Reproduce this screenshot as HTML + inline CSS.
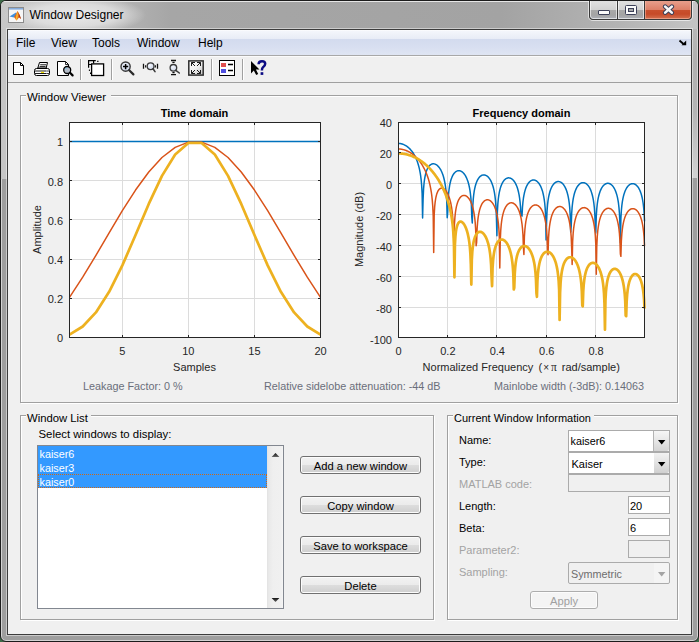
<!DOCTYPE html>
<html><head><meta charset="utf-8"><title>Window Designer</title><style>
*{box-sizing:border-box;margin:0;padding:0}
html,body{width:699px;height:642px;overflow:hidden;background:#3d6a48;font-family:"Liberation Sans",sans-serif}
.abs{position:absolute}
#frame{position:absolute;left:0;top:0;width:699px;height:642px;border-radius:6px 6px 6px 6px;
 background:#9e9e9e;border:1px solid #1c1c1c;overflow:hidden;box-shadow:inset 0 0 0 1px rgba(255,255,255,.55)}
#lstrip{position:absolute;left:0px;top:0px;width:6px;height:178px;background:#c5c5c5}
#rstrip{position:absolute;left:691px;top:0px;width:5px;height:177px;background:linear-gradient(180deg,#bdbdbd 0px,#b0b0b0 60px,#b4b4b4 110px,#d2d2d2 176px)}
#titlebar{position:absolute;left:0px;top:0px;width:697px;height:28px;
 background:linear-gradient(90deg,#c8c8c8 0px,#c2c2c2 40px,#b4b4b4 120px,#a6a6a6 170px,#a3a3a3 500px,#b4b4b4 620px,#c4c4c4 697px);border-top:1px solid #e6e6e6}
#glow{position:absolute;left:3px;top:-5px;width:142px;height:38px;background:radial-gradient(closest-side,rgba(236,236,236,.95) 0%,rgba(230,230,230,.75) 60%,rgba(215,215,215,0) 100%)}
#title{position:absolute;left:28.5px;top:6.5px;font-size:12px;color:#000;white-space:nowrap}
#client{position:absolute;left:7px;top:29px;width:685px;height:606px;border:1px solid #3c3c3c;background:#f0f0f0;box-shadow:0 0 0 1px rgba(255,255,255,.45)}
#menubar{position:absolute;left:8px;top:30px;width:683px;height:26px;
 background:linear-gradient(180deg,#ffffff 0px,#f4f6fb 1px,#e8ecf6 9px,#d3dbee 9px,#d7def0 16px,#dfe5f3 25px);border-bottom:1px solid #a8a8a8}
.menu{position:absolute;top:36px;font-size:12px;color:#000}
#toolbar{position:absolute;left:8px;top:56px;width:683px;height:27px;background:#f0f0f0;border-top:1px solid #fbfbfb;border-bottom:1px solid #a0a0a0}
.sep{position:absolute;top:59px;width:1px;height:21px;background:#a0a0a0;border-right:1px solid #fff;width:2px}
.grp{position:absolute;border:1px solid #a0a0a0;box-shadow:inset 1px 1px 0 #fff,1px 1px 0 #fff}
.glab{position:absolute;font-size:11.5px;color:#000;background:#f0f0f0;padding:0 3px 0 1px;white-space:nowrap}
.lbl{position:absolute;font-size:11px;color:#000;white-space:nowrap}
.dis{color:#a3a3a3}
.btn{position:absolute;height:18px;border:1px solid #707070;border-radius:3px;
 background:linear-gradient(180deg,#f2f2f2 0%,#ebebeb 50%,#dddddd 51%,#cfcfcf 100%);
 font-size:11.2px;text-align:center;line-height:18px;color:#000;box-shadow:inset 0 0 0 1px #fcfcfc}
.fld{position:absolute;border:1px solid #ababab;background:#fff;font-size:11.5px;color:#000;padding-left:2px;line-height:15px}
.stat{position:absolute;font-size:10.8px;color:#6a6e7a;white-space:nowrap}
</style></head>
<body>
<div id="frame"><div id="lstrip"></div><div id="rstrip"></div><div id="titlebar"></div><div id="glow"></div>
<svg class="abs" style="left:7px;top:6px" width="16" height="16" viewBox="0 0 16 16">
<rect x="0.5" y="0.5" width="15" height="15" fill="#f6f6f6" stroke="#8c8c8c"/>
<rect x="1" y="1" width="14" height="1.6" fill="#86acdc"/>
<path d="M1.5,9.5 L5.5,7 L8,5.5 L9,8.5 L6,10.5 Z" fill="#3f8fdc"/>
<path d="M6,10 L8.5,6 L9.3,4 L10.5,5.5 L12,9 L13,12 L11,10.5 L8.5,13.5 Z" fill="#e06818"/>
<path d="M7.5,12 L9.3,4.5 L10,8 L9,13.5 Z" fill="#f5b830"/>
<path d="M10.5,5.5 L12,9 L13,12 L11.2,10 Z" fill="#a83018"/>
</svg>
<div id="title">Window Designer</div>
<div class="abs" style="left:588px;top:-1px;width:103px;height:20px;border:1px solid #3a3a3a;border-top:none;border-radius:0 0 4px 4px;overflow:hidden;background:#3a3a3a;box-shadow:0 1px 0 rgba(255,255,255,.6),-1px 0 0 rgba(255,255,255,.6),1px 0 0 rgba(255,255,255,.6)">
<div class="abs" style="left:0;top:0;width:27px;height:19px;border-radius:0 0 0 3px;box-shadow:inset 0 0 0 1px rgba(255,255,255,.6);background:linear-gradient(180deg,#e2e2e2 0px,#d2d2d2 9.5px,#a9a9a9 10px,#a4a4a4 15px,#aeb2bd 20px)"></div>
<div class="abs" style="left:28px;top:0;width:26px;height:19px;box-shadow:inset 0 0 0 1px rgba(255,255,255,.6);background:linear-gradient(180deg,#e2e2e2 0px,#d2d2d2 9.5px,#a9a9a9 10px,#a4a4a4 15px,#aeb2bd 20px)"></div>
<div class="abs" style="left:55px;top:0;width:46px;height:19px;border-radius:0 0 3px 0;box-shadow:inset 0 0 0 1px rgba(255,200,180,.5);background:linear-gradient(180deg,#e8a290 0px,#dc8068 9.5px,#c9502e 10px,#c64a28 14px,#d67858 20px)"></div>
</div>
<div class="abs" style="left:597px;top:9px;width:12px;height:5px;background:#fafafa;border:1px solid #3c4058;border-radius:1px"></div>
<div class="abs" style="left:624px;top:4px;width:12px;height:10px;border:1px solid #3c4058;border-radius:1.5px;background:#fafafa"></div>
<div class="abs" style="left:627px;top:7px;width:6px;height:4px;border:1px solid #3c4058;background:#a8a8a8"></div>
<svg class="abs" style="left:661px;top:3px" width="13" height="11" viewBox="0 0 13 11"><path d="M3.2,2.6 L9.8,8.6 M9.8,2.6 L3.2,8.6" stroke="#3c4058" stroke-width="4.6" stroke-linecap="round"/><path d="M3.2,2.6 L9.8,8.6 M9.8,2.6 L3.2,8.6" stroke="#f8f8f8" stroke-width="2.6" stroke-linecap="round"/></svg>
</div>
<div id="client"></div>
<div id="menubar"></div>
<div class="menu" style="left:16px">File</div>
<div class="menu" style="left:51px">View</div>
<div class="menu" style="left:92px">Tools</div>
<div class="menu" style="left:137px">Window</div>
<div class="menu" style="left:198px">Help</div>
<svg class="abs" style="left:678px;top:39px" width="10" height="8" viewBox="0 0 10 8"><path d="M1.5,1.5 L5.5,5" stroke="#000" stroke-width="1.8" fill="none"/><path d="M8.2,6.2 L3.5,6.2 L8.2,1.6 Z" fill="#000"/></svg>
<div id="toolbar"></div>
<div class="sep" style="left:80px"></div>
<div class="sep" style="left:111px"></div>
<div class="sep" style="left:211px"></div>
<div class="sep" style="left:242px"></div>
<svg class="abs" style="left:0;top:56px" width="280" height="26" viewBox="0 56 280 26">
<path d="M13.5,62.5 H20.5 L23.5,65.5 V74.5 H13.5 Z" fill="#fff" stroke="#000"/>
<path d="M20.5,62.5 V65.5 H23.5" fill="none" stroke="#000"/>
<path d="M39.5,62.5 H47.5 L46.2,68 H37.8 Z" fill="#fff" stroke="#000"/>
<path d="M40.2,64.8 H46.2 M39.6,66.6 H45.6" stroke="#000" stroke-width="0.9"/>
<rect x="34.5" y="68.5" width="15" height="7" rx="2" fill="#fff" stroke="#000"/>
<path d="M35,71 H49 M35,73.5 H49" stroke="#000" stroke-width="0.9"/>
<rect x="41" y="71.8" width="3" height="1.2" fill="#f2e000"/>
<path d="M46.5,69.5 V75 M48,69.5 V75" stroke="#fff" stroke-width="0.7" stroke-dasharray="1,1"/>
<path d="M57.5,61.5 H65.5 L68.5,64.5 V75.5 H57.5 Z" fill="#fff" stroke="#000"/>
<path d="M65.5,61.5 V64.5 H68.5" fill="none" stroke="#000" stroke-width="0.8"/>
<circle cx="67.2" cy="70" r="3.5" fill="#b4bcc8" stroke="#000" stroke-width="1.3"/>
<path d="M65.5,68.5 L66.5,68" stroke="#5cc8f0" stroke-width="1.2"/>
<path d="M70,72.8 L72.6,75.4" stroke="#000" stroke-width="2.2" stroke-linecap="round"/>
<path d="M88.6,67.8 V60.6 H95.8 M93.6,60.6 V63.5 M88.6,60.6 V64.5 M89,64.5 H91.5" fill="none" stroke="#000" stroke-width="1.2"/>
<path d="M97,61.3 H98.6 M89.4,69.5 V71 M90.5,72.5 V74" stroke="#000" stroke-width="1"/>
<rect x="91.6" y="63.9" width="12" height="11.6" fill="#fff" stroke="#000" stroke-width="1.3"/>
<defs><radialGradient id="lens" cx="0.4" cy="0.35" r="0.7"><stop offset="0" stop-color="#f4f7ff"/><stop offset="1" stop-color="#c8d2e4"/></radialGradient>
<linearGradient id="fv" x1="0" y1="0" x2="1" y2="1"><stop offset="0" stop-color="#ffffff"/><stop offset="0.5" stop-color="#f0f0f0"/><stop offset="1" stop-color="#c4c4c4"/></linearGradient></defs>
<circle cx="125.6" cy="66.6" r="4.6" fill="url(#lens)" stroke="#3a3a3a" stroke-width="1.4"/>
<path d="M123,66.6 H128.2 M125.6,64 V69.2" stroke="#000" stroke-width="1.5"/>
<path d="M129.2,70.2 L133.4,74.4" stroke="#2a2a2a" stroke-width="2.2" stroke-linecap="round"/>
<circle cx="150.6" cy="66.2" r="3.4" fill="url(#lens)" stroke="#3a3a3a" stroke-width="1.3"/>
<path d="M153,68.8 L155,71.6" stroke="#3a3a3a" stroke-width="1.6" stroke-linecap="round"/>
<path d="M143.5,63.8 V68.8 M157.5,63.8 V68.8" stroke="#111" stroke-width="1.3"/>
<path d="M145.6,65.2 V67.4 M155.4,65.2 V67.4" stroke="#111" stroke-width="1.1"/>
<circle cx="173.4" cy="67.8" r="3.3" fill="url(#lens)" stroke="#3a3a3a" stroke-width="1.3"/>
<path d="M175.8,70.3 L179.3,73" stroke="#3a3a3a" stroke-width="1.5" stroke-linecap="round"/>
<path d="M171,60.5 H176 M171,74.6 H176" stroke="#111" stroke-width="1.3"/>
<path d="M172.4,62.4 H174.6 M172.4,72.6 H174.6" stroke="#111" stroke-width="1.1"/>
<rect x="188.8" y="60.9" width="14.4" height="14.2" fill="url(#fv)" stroke="#2e2e2e" stroke-width="1.5"/>
<path d="M191.5,62.5 L195,66 M191.5,62.5 V66 M191.5,62.5 H195 M200.5,62.5 L197,66 M200.5,62.5 V66 M200.5,62.5 H197 M191.5,73.5 L195,70 M191.5,73.5 V70 M191.5,73.5 H195 M200.5,73.5 L197,70 M200.5,73.5 V70 M200.5,73.5 H197" stroke="#1a1a1a" stroke-width="1" fill="none"/>
<rect x="219.5" y="60.5" width="15" height="15" fill="#fff" stroke="#000"/>
<rect x="221" y="63" width="5" height="4" fill="#e05050"/>
<rect x="221" y="69" width="5" height="4" fill="#5050e0"/>
<path d="M228,64.5 H233 M228,70.5 H233" stroke="#000" stroke-width="1.5"/>
<path d="M251,61 L251,73.5 L253.8,70.6 L256.2,75 L258.2,74 L255.9,69.6 L259.5,69.4 Z" fill="#000"/>
<path d="M258.6,64.2 Q258.6,61.2 262,61.2 Q265.2,61.2 265.2,63.8 Q265.2,65.8 263,67.2 Q261.9,68 261.9,70.4" fill="none" stroke="#0c0c84" stroke-width="2.5"/>
<rect x="260.6" y="72.2" width="2.7" height="2.7" fill="#0c0c84"/>
</svg>
<div class="grp" style="left:20px;top:95px;width:658px;height:308px"></div>
<div class="glab" style="left:26px;top:91px;padding-right:5px">Window Viewer</div>
<div class="grp" style="left:20px;top:415px;width:414px;height:205px"></div>
<div class="glab" style="left:26px;top:411.5px;font-size:11.3px">Window List</div>
<div class="grp" style="left:447px;top:415px;width:231px;height:205px"></div>
<div class="glab" style="left:453px;top:411.5px;font-size:11px">Current Window Information</div>
<svg class="abs" style="left:0;top:0" width="699" height="642" viewBox="0 0 699 642"><rect x="69.5" y="122.5" width="251.0" height="215.0" fill="#fff"/>
<rect x="398.5" y="122.5" width="246.0" height="215.0" fill="#fff"/>
<path d="M122.5,122.5V337.5M188.5,122.5V337.5M254.5,122.5V337.5M69.5,298.5H320.5M69.5,259.5H320.5M69.5,219.5H320.5M69.5,180.5H320.5M69.5,141.5H320.5M447.5,122.5V337.5M496.5,122.5V337.5M546.5,122.5V337.5M595.5,122.5V337.5M398.5,152.5H644.5M398.5,183.5H644.5M398.5,214.5H644.5M398.5,245.5H644.5M398.5,276.5H644.5M398.5,307.5H644.5" stroke="#dcdcdc" stroke-width="1" fill="none"/>
<g fill="none" stroke-linejoin="round">
<path d="M69.50,141.50 L82.71,141.50 L95.92,141.50 L109.13,141.50 L122.34,141.50 L135.55,141.50 L148.76,141.50 L161.97,141.50 L175.18,141.50 L188.39,141.50 L201.61,141.50 L214.82,141.50 L228.03,141.50 L241.24,141.50 L254.45,141.50 L267.66,141.50 L280.87,141.50 L294.08,141.50 L307.29,141.50 L320.50,141.50" stroke="#0072bd" stroke-width="1.5"/>
<path d="M69.50,297.34 L82.71,277.20 L95.92,255.37 L109.13,232.85 L122.34,210.71 L135.55,190.06 L148.76,172.01 L161.97,157.51 L175.18,147.37 L188.39,142.16 L201.61,142.16 L214.82,147.37 L228.03,157.51 L241.24,172.01 L254.45,190.06 L267.66,210.71 L280.87,232.85 L294.08,255.37 L307.29,277.20 L320.50,297.34" stroke="#d95319" stroke-width="1.5"/>
<path d="M69.50,334.58 L82.71,326.48 L95.92,312.40 L109.13,291.81 L122.34,265.37 L135.55,235.05 L148.76,203.94 L161.97,175.84 L175.18,154.50 L188.39,142.98 L201.61,142.98 L214.82,154.50 L228.03,175.84 L241.24,203.94 L254.45,235.05 L267.66,265.37 L280.87,291.81 L294.08,312.40 L307.29,326.48 L320.50,334.58" stroke="#edb120" stroke-width="2.7"/>
<path d="M398.00,143.37 L398.48,143.38 L398.96,143.40 L399.45,143.44 L399.93,143.50 L400.41,143.58 L400.89,143.67 L401.38,143.78 L401.86,143.91 L402.34,144.06 L402.82,144.22 L403.31,144.40 L403.79,144.60 L404.27,144.82 L404.75,145.06 L405.24,145.32 L405.72,145.60 L406.20,145.90 L406.68,146.22 L407.17,146.56 L407.65,146.93 L408.13,147.32 L408.61,147.73 L409.10,148.17 L409.58,148.63 L410.06,149.12 L410.54,149.65 L411.03,150.20 L411.51,150.78 L411.99,151.40 L412.47,152.06 L412.96,152.76 L413.44,153.50 L413.92,154.28 L414.40,155.12 L414.88,156.01 L415.37,156.96 L415.85,157.98 L416.33,159.08 L416.81,160.26 L417.30,161.55 L417.78,162.95 L418.26,164.50 L418.74,166.21 L419.23,168.14 L419.71,170.34 L420.19,172.90 L420.67,175.99 L421.16,179.86 L421.64,185.14 L422.12,193.54 L422.60,217.92 L423.09,199.52 L423.57,188.88 L424.05,183.22 L424.53,179.40 L425.02,176.57 L425.50,174.35 L425.98,172.55 L426.46,171.05 L426.95,169.80 L427.43,168.73 L427.91,167.82 L428.39,167.03 L428.88,166.36 L429.36,165.79 L429.84,165.31 L430.32,164.90 L430.80,164.57 L431.29,164.30 L431.77,164.09 L432.25,163.95 L432.73,163.85 L433.22,163.81 L433.70,163.82 L434.18,163.88 L434.66,163.99 L435.15,164.15 L435.63,164.36 L436.11,164.61 L436.59,164.91 L437.08,165.27 L437.56,165.68 L438.04,166.14 L438.52,166.65 L439.01,167.23 L439.49,167.88 L439.97,168.59 L440.45,169.37 L440.94,170.24 L441.42,171.21 L441.90,172.28 L442.38,173.46 L442.87,174.80 L443.35,176.30 L443.83,178.01 L444.31,179.98 L444.79,182.30 L445.28,185.11 L445.76,188.65 L446.24,193.42 L446.72,200.77 L447.21,217.75 L447.69,212.42 L448.17,199.36 L448.65,192.98 L449.14,188.78 L449.62,185.67 L450.10,183.23 L450.58,181.24 L451.07,179.58 L451.55,178.17 L452.03,176.97 L452.51,175.92 L453.00,175.01 L453.48,174.23 L453.96,173.54 L454.44,172.95 L454.93,172.44 L455.41,172.00 L455.89,171.63 L456.37,171.33 L456.86,171.09 L457.34,170.90 L457.82,170.77 L458.30,170.69 L458.79,170.67 L459.27,170.69 L459.75,170.77 L460.23,170.89 L460.71,171.07 L461.20,171.29 L461.68,171.57 L462.16,171.90 L462.64,172.28 L463.13,172.73 L463.61,173.23 L464.09,173.80 L464.57,174.44 L465.06,175.15 L465.54,175.94 L466.02,176.83 L466.50,177.82 L466.99,178.93 L467.47,180.17 L467.95,181.58 L468.43,183.20 L468.92,185.06 L469.40,187.25 L469.88,189.90 L470.36,193.21 L470.85,197.62 L471.33,204.21 L471.81,217.48 L472.29,223.01 L472.78,206.24 L473.26,199.10 L473.74,194.54 L474.22,191.21 L474.71,188.62 L475.19,186.51 L475.67,184.75 L476.15,183.25 L476.63,181.97 L477.12,180.85 L477.60,179.88 L478.08,179.03 L478.56,178.29 L479.05,177.64 L479.53,177.08 L480.01,176.59 L480.49,176.17 L480.98,175.82 L481.46,175.53 L481.94,175.30 L482.42,175.13 L482.91,175.00 L483.39,174.93 L483.87,174.92 L484.35,174.95 L484.84,175.03 L485.32,175.16 L485.80,175.35 L486.28,175.58 L486.77,175.87 L487.25,176.22 L487.73,176.62 L488.21,177.08 L488.70,177.60 L489.18,178.20 L489.66,178.86 L490.14,179.61 L490.62,180.45 L491.11,181.39 L491.59,182.45 L492.07,183.64 L492.55,184.99 L493.04,186.53 L493.52,188.31 L494.00,190.40 L494.48,192.92 L494.97,196.05 L495.45,200.17 L495.93,206.13 L496.41,217.09 L496.90,235.80 L497.38,211.75 L497.86,203.67 L498.34,198.73 L498.83,195.19 L499.31,192.45 L499.79,190.23 L500.27,188.39 L500.76,186.82 L501.24,185.47 L501.72,184.31 L502.20,183.29 L502.69,182.39 L503.17,181.61 L503.65,180.92 L504.13,180.32 L504.62,179.80 L505.10,179.35 L505.58,178.96 L506.06,178.64 L506.54,178.38 L507.03,178.17 L507.51,178.02 L507.99,177.92 L508.47,177.87 L508.96,177.87 L509.44,177.93 L509.92,178.03 L510.40,178.19 L510.89,178.39 L511.37,178.65 L511.85,178.97 L512.33,179.34 L512.82,179.77 L513.30,180.26 L513.78,180.82 L514.26,181.46 L514.75,182.17 L515.23,182.98 L515.71,183.88 L516.19,184.89 L516.68,186.04 L517.16,187.34 L517.64,188.82 L518.12,190.53 L518.61,192.54 L519.09,194.94 L519.57,197.91 L520.05,201.77 L520.54,207.23 L521.02,216.58 M521.98,216.66 L522.46,207.39 L522.95,202.02 L523.43,198.24 L523.91,195.36 L524.39,193.04 L524.88,191.11 L525.36,189.48 L525.84,188.08 L526.32,186.87 L526.81,185.80 L527.29,184.87 L527.77,184.05 L528.25,183.33 L528.74,182.70 L529.22,182.15 L529.70,181.67 L530.18,181.26 L530.67,180.91 L531.15,180.62 L531.63,180.39 L532.11,180.22 L532.60,180.09 L533.08,180.02 L533.56,180.00 L534.04,180.03 L534.53,180.11 L535.01,180.24 L535.49,180.43 L535.97,180.66 L536.46,180.95 L536.94,181.30 L537.42,181.71 L537.90,182.17 L538.38,182.71 L538.87,183.32 L539.35,184.00 L539.83,184.78 L540.31,185.65 L540.80,186.63 L541.28,187.73 L541.76,188.98 L542.24,190.41 L542.73,192.06 L543.21,193.99 L543.69,196.30 L544.17,199.12 L544.66,202.75 L545.14,207.78 L545.62,215.94 L546.10,240.08 L546.59,221.46 L547.07,210.59 L547.55,204.71 L548.03,200.68 L548.52,197.64 L549.00,195.21 L549.48,193.21 L549.96,191.51 L550.45,190.06 L550.93,188.80 L551.41,187.70 L551.89,186.73 L552.38,185.88 L552.86,185.13 L553.34,184.47 L553.82,183.89 L554.30,183.39 L554.79,182.96 L555.27,182.59 L555.75,182.28 L556.23,182.02 L556.72,181.83 L557.20,181.68 L557.68,181.59 L558.16,181.55 L558.65,181.56 L559.13,181.62 L559.61,181.73 L560.09,181.90 L560.58,182.11 L561.06,182.38 L561.54,182.71 L562.02,183.09 L562.51,183.54 L562.99,184.05 L563.47,184.63 L563.95,185.29 L564.44,186.04 L564.92,186.88 L565.40,187.82 L565.88,188.89 L566.37,190.11 L566.85,191.49 L567.33,193.08 L567.81,194.94 L568.29,197.15 L568.78,199.84 L569.26,203.27 L569.74,207.93 L570.22,215.18 L570.71,232.05 L571.19,226.61 L571.67,213.45 L572.15,206.97 L572.64,202.66 L573.12,199.45 L573.60,196.91 L574.08,194.82 L574.57,193.06 L575.05,191.56 L575.53,190.25 L576.01,189.11 L576.50,188.11 L576.98,187.23 L577.46,186.45 L577.94,185.77 L578.43,185.17 L578.91,184.64 L579.39,184.18 L579.87,183.79 L580.36,183.46 L580.84,183.19 L581.32,182.97 L581.80,182.81 L582.29,182.70 L582.77,182.64 L583.25,182.63 L583.73,182.68 L584.21,182.77 L584.70,182.91 L585.18,183.11 L585.66,183.36 L586.14,183.67 L586.63,184.03 L587.11,184.46 L587.59,184.95 L588.07,185.51 L588.56,186.15 L589.04,186.87 L589.52,187.68 L590.00,188.59 L590.49,189.63 L590.97,190.80 L591.45,192.14 L591.93,193.68 L592.42,195.47 L592.90,197.59 L593.38,200.17 L593.86,203.42 L594.35,207.76 L594.83,214.27 L595.31,227.47 L595.79,232.94 L596.28,216.11 L596.76,208.89 L597.24,204.27 L597.72,200.87 L598.21,198.21 L598.69,196.04 L599.17,194.22 L599.65,192.66 L600.13,191.31 L600.62,190.13 L601.10,189.10 L601.58,188.18 L602.06,187.38 L602.55,186.67 L603.03,186.04 L603.51,185.50 L603.99,185.02 L604.48,184.61 L604.96,184.26 L605.44,183.97 L605.92,183.73 L606.41,183.55 L606.89,183.42 L607.37,183.35 L607.85,183.32 L608.34,183.35 L608.82,183.42 L609.30,183.55 L609.78,183.73 L610.27,183.96 L610.75,184.25 L611.23,184.59 L611.71,185.00 L612.20,185.47 L612.68,186.01 L613.16,186.62 L613.64,187.32 L614.12,188.10 L614.61,188.99 L615.09,189.99 L615.57,191.13 L616.05,192.43 L616.54,193.92 L617.02,195.65 L617.50,197.69 L617.98,200.15 L618.47,203.23 L618.95,207.29 L619.43,213.21 L619.91,224.11 L620.40,242.78 L620.88,218.67 L621.36,210.55 L621.84,205.56 L622.33,201.96 L622.81,199.17 L623.29,196.91 L623.77,195.02 L624.26,193.40 L624.74,192.01 L625.22,190.79 L625.70,189.73 L626.19,188.78 L626.67,187.95 L627.15,187.22 L627.63,186.57 L628.12,186.00 L628.60,185.50 L629.08,185.07 L629.56,184.70 L630.04,184.39 L630.53,184.14 L631.01,183.94 L631.49,183.80 L631.97,183.70 L632.46,183.66 L632.94,183.67 L633.42,183.73 L633.90,183.84 L634.39,184.00 L634.87,184.22 L635.35,184.49 L635.83,184.81 L636.32,185.20 L636.80,185.65 L637.28,186.17 L637.76,186.76 L638.25,187.43 L638.73,188.19 L639.21,189.05 L639.69,190.02 L640.18,191.13 L640.66,192.38 L641.14,193.82 L641.62,195.49 L642.11,197.46 L642.59,199.82 L643.07,202.75 L643.55,206.56 L644.04,211.98 L644.52,221.28" stroke="#0072bd" stroke-width="1.5"/>
<path d="M398.00,148.97 L398.48,148.98 L398.96,149.00 L399.45,149.02 L399.93,149.06 L400.41,149.11 L400.89,149.17 L401.38,149.24 L401.86,149.32 L402.34,149.41 L402.82,149.52 L403.31,149.63 L403.79,149.76 L404.27,149.89 L404.75,150.04 L405.24,150.20 L405.72,150.37 L406.20,150.56 L406.68,150.75 L407.17,150.96 L407.65,151.18 L408.13,151.41 L408.61,151.65 L409.10,151.91 L409.58,152.18 L410.06,152.46 L410.54,152.75 L411.03,153.06 L411.51,153.39 L411.99,153.72 L412.47,154.07 L412.96,154.44 L413.44,154.82 L413.92,155.22 L414.40,155.63 L414.88,156.06 L415.37,156.50 L415.85,156.97 L416.33,157.45 L416.81,157.95 L417.30,158.46 L417.78,159.00 L418.26,159.56 L418.74,160.14 L419.23,160.74 L419.71,161.37 L420.19,162.02 L420.67,162.69 L421.16,163.40 L421.64,164.13 L422.12,164.89 L422.60,165.69 L423.09,166.52 L423.57,167.38 L424.05,168.29 L424.53,169.24 L425.02,170.24 L425.50,171.29 L425.98,172.39 L426.46,173.56 L426.95,174.80 L427.43,176.12 L427.91,177.53 L428.39,179.04 L428.88,180.68 L429.36,182.47 L429.84,184.43 L430.32,186.63 L430.80,189.12 L431.29,192.01 L431.77,195.47 L432.25,199.85 L432.73,205.90 L433.22,216.15 L433.70,252.48 L434.18,215.35 L434.66,206.94 L435.15,202.13 L435.63,198.86 L436.11,196.45 L436.59,194.58 L437.08,193.10 L437.56,191.92 L438.04,190.96 L438.52,190.19 L439.01,189.57 L439.49,189.08 L439.97,188.70 L440.45,188.43 L440.94,188.25 L441.42,188.16 L441.90,188.15 L442.38,188.21 L442.87,188.35 L443.35,188.56 L443.83,188.83 L444.31,189.18 L444.79,189.60 L445.28,190.09 L445.76,190.65 L446.24,191.30 L446.72,192.02 L447.21,192.84 L447.69,193.75 L448.17,194.78 L448.65,195.92 L449.14,197.21 L449.62,198.67 L450.10,200.34 L450.58,202.26 L451.07,204.51 L451.55,207.21 L452.03,210.58 L452.51,215.03 L453.00,221.62 L453.48,234.66 L453.96,241.57 L454.44,224.32 L454.93,217.17 L455.41,212.67 L455.89,209.42 L456.37,206.91 L456.86,204.89 L457.34,203.23 L457.82,201.84 L458.30,200.66 L458.79,199.65 L459.27,198.79 L459.75,198.06 L460.23,197.44 L460.71,196.92 L461.20,196.48 L461.68,196.12 L462.16,195.84 L462.64,195.64 L463.13,195.49 L463.61,195.41 L464.09,195.40 L464.57,195.44 L465.06,195.54 L465.54,195.70 L466.02,195.92 L466.50,196.20 L466.99,196.55 L467.47,196.95 L467.95,197.42 L468.43,197.97 L468.92,198.58 L469.40,199.28 L469.88,200.07 L470.36,200.95 L470.85,201.94 L471.33,203.05 L471.81,204.32 L472.29,205.75 L472.78,207.39 L473.26,209.30 L473.74,211.56 L474.22,214.30 L474.71,217.75 L475.19,222.42 L475.67,229.59 L476.15,245.69 L476.63,242.38 L477.12,228.75 L477.60,222.22 L478.08,217.94 L478.56,214.78 L479.05,212.30 L479.53,210.28 L480.01,208.59 L480.49,207.16 L480.98,205.94 L481.46,204.88 L481.94,203.97 L482.42,203.18 L482.91,202.49 L483.39,201.90 L483.87,201.39 L484.35,200.96 L484.84,200.61 L485.32,200.32 L485.80,200.10 L486.28,199.93 L486.77,199.83 L487.25,199.78 L487.73,199.79 L488.21,199.86 L488.70,199.98 L489.18,200.16 L489.66,200.39 L490.14,200.68 L490.62,201.03 L491.11,201.44 L491.59,201.92 L492.07,202.47 L492.55,203.10 L493.04,203.80 L493.52,204.59 L494.00,205.49 L494.48,206.49 L494.97,207.63 L495.45,208.92 L495.93,210.39 L496.41,212.08 L496.90,214.07 L497.38,216.43 L497.86,219.34 L498.34,223.09 L498.83,228.33 L499.31,237.00 L499.79,268.00 L500.27,240.14 L500.76,230.08 L501.24,224.46 L501.72,220.58 L502.20,217.64 L502.69,215.29 L503.17,213.36 L503.65,211.73 L504.13,210.34 L504.62,209.14 L505.10,208.09 L505.58,207.18 L506.06,206.39 L506.54,205.70 L507.03,205.09 L507.51,204.57 L507.99,204.13 L508.47,203.76 L508.96,203.45 L509.44,203.20 L509.92,203.01 L510.40,202.88 L510.89,202.81 L511.37,202.79 L511.85,202.83 L512.33,202.92 L512.82,203.06 L513.30,203.26 L513.78,203.51 L514.26,203.82 L514.75,204.19 L515.23,204.63 L515.71,205.13 L516.19,205.70 L516.68,206.35 L517.16,207.08 L517.64,207.91 L518.12,208.84 L518.61,209.90 L519.09,211.09 L519.57,212.44 L520.05,214.00 L520.54,215.81 L521.02,217.95 L521.50,220.54 L521.98,223.79 L522.46,228.12 L522.95,234.58 L523.43,247.46 L523.91,254.43 L524.39,236.97 L524.88,229.69 L525.36,225.05 L525.84,221.67 L526.32,219.03 L526.81,216.88 L527.29,215.08 L527.77,213.56 L528.25,212.24 L528.74,211.10 L529.22,210.10 L529.70,209.23 L530.18,208.46 L530.67,207.79 L531.15,207.21 L531.63,206.70 L532.11,206.27 L532.60,205.91 L533.08,205.60 L533.56,205.36 L534.04,205.18 L534.53,205.05 L535.01,204.98 L535.49,204.96 L535.97,204.99 L536.46,205.08 L536.94,205.22 L537.42,205.41 L537.90,205.66 L538.38,205.97 L538.87,206.34 L539.35,206.76 L539.83,207.26 L540.31,207.83 L540.80,208.47 L541.28,209.20 L541.76,210.02 L542.24,210.95 L542.73,212.00 L543.21,213.19 L543.69,214.54 L544.17,216.10 L544.66,217.91 L545.14,220.06 L545.62,222.66 L546.10,225.94 L546.59,230.33 L547.07,236.94 L547.55,250.49 L548.03,254.69 L548.52,238.41 L549.00,231.31 L549.48,226.74 L549.96,223.39 L550.45,220.76 L550.93,218.62 L551.41,216.83 L551.89,215.30 L552.38,213.98 L552.86,212.83 L553.34,211.82 L553.82,210.94 L554.30,210.17 L554.79,209.49 L555.27,208.89 L555.75,208.38 L556.23,207.93 L556.72,207.55 L557.20,207.24 L557.68,206.99 L558.16,206.79 L558.65,206.65 L559.13,206.56 L559.61,206.52 L560.09,206.54 L560.58,206.61 L561.06,206.74 L561.54,206.91 L562.02,207.15 L562.51,207.43 L562.99,207.78 L563.47,208.19 L563.95,208.67 L564.44,209.21 L564.92,209.83 L565.40,210.54 L565.88,211.33 L566.37,212.23 L566.85,213.24 L567.33,214.39 L567.81,215.70 L568.29,217.21 L568.78,218.95 L569.26,221.02 L569.74,223.51 L570.22,226.62 L570.71,230.73 L571.19,236.73 L571.67,247.89 L572.15,264.52 L572.64,241.76 L573.12,233.78 L573.60,228.86 L574.08,225.31 L574.57,222.55 L575.05,220.32 L575.53,218.45 L576.01,216.86 L576.50,215.50 L576.98,214.30 L577.46,213.26 L577.94,212.35 L578.43,211.54 L578.91,210.83 L579.39,210.21 L579.87,209.67 L580.36,209.20 L580.84,208.80 L581.32,208.46 L581.80,208.18 L582.29,207.96 L582.77,207.79 L583.25,207.68 L583.73,207.63 L584.21,207.62 L584.70,207.67 L585.18,207.77 L585.66,207.92 L586.14,208.13 L586.63,208.39 L587.11,208.71 L587.59,209.09 L588.07,209.54 L588.56,210.05 L589.04,210.64 L589.52,211.31 L590.00,212.06 L590.49,212.92 L590.97,213.88 L591.45,214.98 L591.93,216.22 L592.42,217.65 L592.90,219.30 L593.38,221.23 L593.86,223.55 L594.35,226.41 L594.83,230.11 L595.31,235.29 L595.79,243.89 L596.28,274.30 L596.76,247.06 L597.24,236.91 L597.72,231.23 L598.21,227.29 L598.69,224.30 L599.17,221.90 L599.65,219.91 L600.13,218.23 L600.62,216.78 L601.10,215.53 L601.58,214.43 L602.06,213.46 L602.55,212.61 L603.03,211.86 L603.51,211.20 L603.99,210.63 L604.48,210.12 L604.96,209.69 L605.44,209.32 L605.92,209.01 L606.41,208.76 L606.89,208.57 L607.37,208.43 L607.85,208.35 L608.34,208.31 L608.82,208.33 L609.30,208.41 L609.78,208.53 L610.27,208.71 L610.75,208.94 L611.23,209.23 L611.71,209.58 L612.20,209.99 L612.68,210.47 L613.16,211.02 L613.64,211.64 L614.12,212.35 L614.61,213.16 L615.09,214.07 L615.57,215.10 L616.05,216.27 L616.54,217.61 L617.02,219.15 L617.50,220.95 L617.98,223.08 L618.47,225.68 L618.95,228.97 L619.43,233.39 L619.91,240.10 L620.40,254.20 L620.88,256.36 L621.36,240.84 L621.84,233.85 L622.33,229.32 L622.81,225.98 L623.29,223.35 L623.77,221.19 L624.26,219.38 L624.74,217.84 L625.22,216.50 L625.70,215.33 L626.19,214.30 L626.67,213.40 L627.15,212.60 L627.63,211.89 L628.12,211.27 L628.60,210.73 L629.08,210.26 L629.56,209.86 L630.04,209.52 L630.53,209.24 L631.01,209.01 L631.49,208.84 L631.97,208.73 L632.46,208.67 L632.94,208.66 L633.42,208.70 L633.90,208.79 L634.39,208.94 L634.87,209.14 L635.35,209.40 L635.83,209.71 L636.32,210.09 L636.80,210.53 L637.28,211.04 L637.76,211.62 L638.25,212.28 L638.73,213.04 L639.21,213.89 L639.69,214.85 L640.18,215.95 L640.66,217.20 L641.14,218.64 L641.62,220.30 L642.11,222.27 L642.59,224.62 L643.07,227.55 L643.55,231.36 L644.04,236.78 L644.52,246.09" stroke="#d95319" stroke-width="1.5"/>
<path d="M398.00,153.38 L398.48,153.38 L398.96,153.39 L399.45,153.40 L399.93,153.43 L400.41,153.46 L400.89,153.49 L401.38,153.53 L401.86,153.58 L402.34,153.63 L402.82,153.70 L403.31,153.76 L403.79,153.84 L404.27,153.92 L404.75,154.00 L405.24,154.10 L405.72,154.20 L406.20,154.30 L406.68,154.42 L407.17,154.54 L407.65,154.66 L408.13,154.80 L408.61,154.94 L409.10,155.08 L409.58,155.24 L410.06,155.40 L410.54,155.57 L411.03,155.74 L411.51,155.92 L411.99,156.11 L412.47,156.30 L412.96,156.51 L413.44,156.71 L413.92,156.93 L414.40,157.15 L414.88,157.39 L415.37,157.62 L415.85,157.87 L416.33,158.12 L416.81,158.38 L417.30,158.65 L417.78,158.93 L418.26,159.21 L418.74,159.50 L419.23,159.80 L419.71,160.11 L420.19,160.43 L420.67,160.75 L421.16,161.09 L421.64,161.43 L422.12,161.78 L422.60,162.13 L423.09,162.50 L423.57,162.88 L424.05,163.26 L424.53,163.66 L425.02,164.06 L425.50,164.47 L425.98,164.90 L426.46,165.33 L426.95,165.77 L427.43,166.22 L427.91,166.69 L428.39,167.16 L428.88,167.65 L429.36,168.14 L429.84,168.65 L430.32,169.17 L430.80,169.70 L431.29,170.24 L431.77,170.80 L432.25,171.36 L432.73,171.94 L433.22,172.54 L433.70,173.15 L434.18,173.77 L434.66,174.40 L435.15,175.05 L435.63,175.72 L436.11,176.41 L436.59,177.11 L437.08,177.82 L437.56,178.56 L438.04,179.31 L438.52,180.08 L439.01,180.88 L439.49,181.69 L439.97,182.53 L440.45,183.39 L440.94,184.27 L441.42,185.18 L441.90,186.12 L442.38,187.08 L442.87,188.08 L443.35,189.11 L443.83,190.17 L444.31,191.27 L444.79,192.41 L445.28,193.60 L445.76,194.83 L446.24,196.12 L446.72,197.46 L447.21,198.87 L447.69,200.34 L448.17,201.90 L448.65,203.56 L449.14,205.31 L449.62,207.20 L450.10,209.23 L450.58,211.45 L451.07,213.90 L451.55,216.65 L452.03,219.80 L452.51,223.53 L453.00,228.19 L453.48,234.56 L453.96,245.25 L454.44,277.31 L454.93,244.34 L455.41,236.34 L455.89,231.86 L456.37,228.89 L456.86,226.78 L457.34,225.22 L457.82,224.04 L458.30,223.17 L458.79,222.52 L459.27,222.07 L459.75,221.78 L460.23,221.63 L460.71,221.61 L461.20,221.70 L461.68,221.90 L462.16,222.20 L462.64,222.60 L463.13,223.09 L463.61,223.69 L464.09,224.38 L464.57,225.17 L465.06,226.08 L465.54,227.11 L466.02,228.26 L466.50,229.57 L466.99,231.04 L467.47,232.72 L467.95,234.66 L468.43,236.91 L468.92,239.59 L469.40,242.89 L469.88,247.18 L470.36,253.31 L470.85,264.33 L471.33,284.57 L471.81,259.85 L472.29,251.92 L472.78,247.19 L473.26,243.87 L473.74,241.37 L474.22,239.40 L474.71,237.82 L475.19,236.52 L475.67,235.45 L476.15,234.56 L476.63,233.83 L477.12,233.23 L477.60,232.75 L478.08,232.38 L478.56,232.10 L479.05,231.91 L479.53,231.80 L480.01,231.77 L480.49,231.81 L480.98,231.93 L481.46,232.12 L481.94,232.37 L482.42,232.70 L482.91,233.10 L483.39,233.57 L483.87,234.12 L484.35,234.75 L484.84,235.46 L485.32,236.26 L485.80,237.16 L486.28,238.18 L486.77,239.31 L487.25,240.60 L487.73,242.05 L488.21,243.70 L488.70,245.62 L489.18,247.86 L489.66,250.55 L490.14,253.90 L490.62,258.33 L491.11,264.84 L491.59,277.54 L492.07,286.05 L492.55,268.07 L493.04,260.83 L493.52,256.29 L494.00,253.03 L494.48,250.53 L494.97,248.53 L495.45,246.88 L495.93,245.51 L496.41,244.35 L496.90,243.38 L497.38,242.55 L497.86,241.85 L498.34,241.26 L498.83,240.77 L499.31,240.37 L499.79,240.06 L500.27,239.82 L500.76,239.66 L501.24,239.56 L501.72,239.53 L502.20,239.57 L502.69,239.67 L503.17,239.83 L503.65,240.05 L504.13,240.34 L504.62,240.69 L505.10,241.11 L505.58,241.59 L506.06,242.15 L506.54,242.79 L507.03,243.50 L507.51,244.31 L507.99,245.21 L508.47,246.23 L508.96,247.37 L509.44,248.66 L509.92,250.12 L510.40,251.79 L510.89,253.72 L511.37,256.00 L511.85,258.76 L512.33,262.23 L512.82,266.89 L513.30,273.98 L513.78,289.47 L514.26,287.96 L514.75,273.86 L515.23,267.27 L515.71,262.99 L516.19,259.85 L516.68,257.40 L517.16,255.43 L517.64,253.79 L518.12,252.41 L518.61,251.25 L519.09,250.25 L519.57,249.39 L520.05,248.66 L520.54,248.04 L521.02,247.51 L521.50,247.08 L521.98,246.72 L522.46,246.44 L522.95,246.23 L523.43,246.08 L523.91,246.00 L524.39,245.99 L524.88,246.03 L525.36,246.13 L525.84,246.29 L526.32,246.51 L526.81,246.80 L527.29,247.14 L527.77,247.55 L528.25,248.02 L528.74,248.57 L529.22,249.19 L529.70,249.89 L530.18,250.67 L530.67,251.56 L531.15,252.55 L531.63,253.67 L532.11,254.93 L532.60,256.35 L533.08,257.99 L533.56,259.88 L534.04,262.11 L534.53,264.80 L535.01,268.17 L535.49,272.67 L535.97,279.41 L536.46,293.26 L536.94,296.78 L537.42,280.90 L537.90,273.95 L538.38,269.50 L538.87,266.26 L539.35,263.74 L539.83,261.71 L540.31,260.02 L540.80,258.60 L541.28,257.39 L541.76,256.36 L542.24,255.47 L542.73,254.70 L543.21,254.05 L543.69,253.49 L544.17,253.02 L544.66,252.63 L545.14,252.32 L545.62,252.08 L546.10,251.90 L546.59,251.79 L547.07,251.74 L547.55,251.75 L548.03,251.82 L548.52,251.94 L549.00,252.13 L549.48,252.37 L549.96,252.68 L550.45,253.05 L550.93,253.48 L551.41,253.98 L551.89,254.55 L552.38,255.20 L552.86,255.93 L553.34,256.75 L553.82,257.68 L554.30,258.72 L554.79,259.89 L555.27,261.21 L555.75,262.71 L556.23,264.45 L556.72,266.47 L557.20,268.88 L557.68,271.83 L558.16,275.62 L558.65,280.89 L559.13,289.57 L559.61,319.92 L560.09,292.99 L560.58,282.93 L561.06,277.35 L561.54,273.52 L562.02,270.64 L562.51,268.35 L562.99,266.48 L563.47,264.91 L563.95,263.58 L564.44,262.45 L564.92,261.48 L565.40,260.64 L565.88,259.92 L566.37,259.31 L566.85,258.78 L567.33,258.35 L567.81,257.99 L568.29,257.71 L568.78,257.49 L569.26,257.34 L569.74,257.25 L570.22,257.23 L570.71,257.26 L571.19,257.35 L571.67,257.51 L572.15,257.72 L572.64,257.99 L573.12,258.33 L573.60,258.73 L574.08,259.19 L574.57,259.73 L575.05,260.34 L575.53,261.03 L576.01,261.81 L576.50,262.69 L576.98,263.68 L577.46,264.79 L577.94,266.04 L578.43,267.47 L578.91,269.11 L579.39,271.00 L579.87,273.24 L580.36,275.95 L580.84,279.36 L581.32,283.92 L581.80,290.83 L582.29,305.48 L582.77,306.32 L583.25,291.42 L583.73,284.65 L584.21,280.28 L584.70,277.08 L585.18,274.59 L585.66,272.57 L586.14,270.90 L586.63,269.50 L587.11,268.30 L587.59,267.28 L588.07,266.40 L588.56,265.65 L589.04,265.01 L589.52,264.46 L590.00,264.01 L590.49,263.64 L590.97,263.34 L591.45,263.12 L591.93,262.97 L592.42,262.88 L592.90,262.85 L593.38,262.89 L593.86,262.99 L594.35,263.15 L594.83,263.38 L595.31,263.67 L595.79,264.02 L596.28,264.44 L596.76,264.94 L597.24,265.50 L597.72,266.15 L598.21,266.89 L598.69,267.72 L599.17,268.65 L599.65,269.71 L600.13,270.90 L600.62,272.26 L601.10,273.81 L601.58,275.60 L602.06,277.70 L602.55,280.22 L603.03,283.34 L603.51,287.42 L603.99,293.25 L604.48,303.62 L604.96,329.73 L605.44,300.44 L605.92,292.05 L606.41,287.04 L606.89,283.51 L607.37,280.81 L607.85,278.66 L608.34,276.90 L608.82,275.43 L609.30,274.18 L609.78,273.13 L610.27,272.23 L610.75,271.46 L611.23,270.82 L611.71,270.28 L612.20,269.83 L612.68,269.48 L613.16,269.20 L613.64,269.01 L614.12,268.88 L614.61,268.83 L615.09,268.85 L615.57,268.94 L616.05,269.10 L616.54,269.33 L617.02,269.64 L617.50,270.01 L617.98,270.46 L618.47,271.00 L618.95,271.62 L619.43,272.33 L619.91,273.14 L620.40,274.07 L620.88,275.13 L621.36,276.34 L621.84,277.72 L622.33,279.32 L622.81,281.18 L623.29,283.39 L623.77,286.07 L624.26,289.46 L624.74,294.01 L625.22,300.92 L625.70,315.66 L626.19,316.18 L626.67,301.38 L627.15,294.64 L627.63,290.28 L628.12,287.09 L628.60,284.62 L629.08,282.63 L629.56,280.99 L630.04,279.62 L630.53,278.46 L631.01,277.48 L631.49,276.66 L631.97,275.96 L632.46,275.39 L632.94,274.93 L633.42,274.56 L633.90,274.29 L634.39,274.10 L634.87,274.01 L635.35,273.99 L635.83,274.06 L636.32,274.21 L636.80,274.44 L637.28,274.77 L637.76,275.18 L638.25,275.69 L638.73,276.30 L639.21,277.03 L639.69,277.88 L640.18,278.87 L640.66,280.03 L641.14,281.39 L641.62,282.99 L642.11,284.89 L642.59,287.20 L643.07,290.08 L643.55,293.87 L644.04,299.26 L644.52,308.55" stroke="#edb120" stroke-width="2.7"/>
</g>
<rect x="69.5" y="122.5" width="251.0" height="215.0" fill="none" stroke="#262626" stroke-width="1"/>
<rect x="398.5" y="122.5" width="246.0" height="215.0" fill="none" stroke="#262626" stroke-width="1"/>
<path d="M122.5,122.5V125.0M122.5,337.5V335.0M188.5,122.5V125.0M188.5,337.5V335.0M254.5,122.5V125.0M254.5,337.5V335.0M69.5,298.5H72.0M320.5,298.5H318.0M69.5,259.5H72.0M320.5,259.5H318.0M69.5,219.5H72.0M320.5,219.5H318.0M69.5,180.5H72.0M320.5,180.5H318.0M69.5,141.5H72.0M320.5,141.5H318.0M447.5,122.5V125.0M447.5,337.5V335.0M496.5,122.5V125.0M496.5,337.5V335.0M546.5,122.5V125.0M546.5,337.5V335.0M595.5,122.5V125.0M595.5,337.5V335.0M398.5,152.5H401.0M644.5,152.5H642.0M398.5,183.5H401.0M644.5,183.5H642.0M398.5,214.5H401.0M644.5,214.5H642.0M398.5,245.5H401.0M644.5,245.5H642.0M398.5,276.5H401.0M644.5,276.5H642.0M398.5,307.5H401.0M644.5,307.5H642.0" stroke="#262626" stroke-width="1" fill="none"/>
<g font-family="Liberation Sans" font-size="11" fill="#262626">
<text x="194.5" y="117" text-anchor="middle" font-weight="bold" fill="#000">Time domain</text>
<text x="521.5" y="117" text-anchor="middle" font-weight="bold" fill="#000">Frequency domain</text>
<text x="63" y="342.30" text-anchor="end">0</text>
<text x="63" y="303.10" text-anchor="end">0.2</text>
<text x="63" y="263.90" text-anchor="end">0.4</text>
<text x="63" y="224.70" text-anchor="end">0.6</text>
<text x="63" y="185.50" text-anchor="end">0.8</text>
<text x="63" y="146.30" text-anchor="end">1</text>
<text x="122.34" y="355" text-anchor="middle">5</text>
<text x="188.39" y="355" text-anchor="middle">10</text>
<text x="254.45" y="355" text-anchor="middle">15</text>
<text x="320.50" y="355" text-anchor="middle">20</text>
<text x="194.5" y="371" text-anchor="middle">Samples</text>
<text transform="translate(41,229.5) rotate(-90)" text-anchor="middle">Amplitude</text>
<text x="392" y="126.50" text-anchor="end">40</text>
<text x="392" y="157.50" text-anchor="end">20</text>
<text x="392" y="188.50" text-anchor="end">0</text>
<text x="392" y="219.50" text-anchor="end">-20</text>
<text x="392" y="250.50" text-anchor="end">-40</text>
<text x="392" y="281.50" text-anchor="end">-60</text>
<text x="392" y="312.50" text-anchor="end">-80</text>
<text x="392" y="343.50" text-anchor="end">-100</text>
<text x="398.50" y="355" text-anchor="middle">0</text>
<text x="447.90" y="355" text-anchor="middle">0.2</text>
<text x="497.30" y="355" text-anchor="middle">0.4</text>
<text x="546.70" y="355" text-anchor="middle">0.6</text>
<text x="596.10" y="355" text-anchor="middle">0.8</text>
<text x="422.6" y="371">Normalized Frequency</text><text x="538.5" y="371">(</text><text x="543.2" y="371" font-size="10">&#215;</text><text x="551" y="371" font-family="Liberation Serif" font-size="11.5">&#960;</text><text x="561.8" y="371">rad/sample)</text>
<text transform="translate(363,229.5) rotate(-90)" text-anchor="middle">Magnitude (dB)</text>
</g></svg>
<div class="stat" style="left:83px;top:379.5px">Leakage Factor: 0 %</div>
<div class="stat" style="left:264px;top:379.5px">Relative sidelobe attenuation: -44 dB</div>
<div class="stat" style="left:494px;top:379.5px">Mainlobe width (-3dB): 0.14063</div>
<div class="lbl" style="left:38.5px;top:428px;font-size:11.4px">Select windows to display:</div>
<div class="abs" style="left:37px;top:445px;width:247px;height:164px;border:1px solid #828790;background:#fff"></div>
<div class="abs" style="left:38px;top:446px;width:229px;height:42px;background:#3399ff"></div>
<div class="abs" style="left:38px;top:474px;width:229px;height:14px;border:1px dotted #cc6818"></div>
<div class="abs" style="left:267px;top:446px;width:16px;height:162px;background:linear-gradient(90deg,#e2e2e2 0px,#e8e8e8 1.5px,#ebebeb 3px,#efefef 6px,#f0f0f0 14px,#f6f6f6 16px)"></div>
<svg class="abs" style="left:271px;top:452px" width="9" height="6"><defs><linearGradient id="ag" x1="0" y1="0" x2="0" y2="1"><stop offset="0" stop-color="#111"/><stop offset="1" stop-color="#666"/></linearGradient></defs><path d="M0.6,4.9 L4.5,1 L8.4,4.9 Z" fill="url(#ag)"/></svg>
<svg class="abs" style="left:271px;top:597px" width="9" height="6"><path d="M0.6,1 L4.5,4.9 L8.4,1 Z" fill="url(#ag)"/></svg>
<div class="lbl" style="left:39.5px;top:448px;color:#fff;font-size:10.8px">kaiser6</div>
<div class="lbl" style="left:39.5px;top:462px;color:#fff;font-size:10.8px">kaiser3</div>
<div class="lbl" style="left:39.5px;top:476px;color:#fff;font-size:10.8px">kaiser0</div>
<div class="btn" style="left:300px;top:456px;width:121px">Add a new window</div>
<div class="btn" style="left:300px;top:496px;width:121px">Copy window</div>
<div class="btn" style="left:300px;top:536px;width:121px">Save to workspace</div>
<div class="btn" style="left:300px;top:576px;width:121px">Delete</div>
<div class="lbl" style="left:459px;top:434px">Name:</div>
<div class="lbl" style="left:459px;top:456px">Type:</div>
<div class="lbl dis" style="left:459px;top:478px">MATLAB code:</div>
<div class="lbl" style="left:459px;top:500px">Length:</div>
<div class="lbl" style="left:459px;top:522px">Beta:</div>
<div class="lbl dis" style="left:459px;top:544px">Parameter2:</div>
<div class="lbl dis" style="left:459px;top:566px">Sampling:</div>
<div class="fld" style="left:568px;top:430px;width:102px;height:22px"></div>
<div class="abs lbl" style="left:570.5px;top:435px;font-size:10.8px">kaiser6</div>
<div class="abs" style="left:653px;top:431px;width:16px;height:20px;border-left:1px solid #b4b4b4;border-radius:0 2px 2px 0;background:linear-gradient(180deg,#f6f6f6,#e6e6e6 50%,#d4d4d4)"></div>
<svg class="abs" style="left:658px;top:439.5px" width="8" height="5"><path d="M0,0 H7.4 L3.7,4.6 Z" fill="#000"/></svg>
<div class="fld" style="left:568px;top:452px;width:102px;height:22px"></div>
<div class="abs lbl" style="left:571.5px;top:458px;font-size:11px">Kaiser</div>
<div class="abs" style="left:654px;top:453px;width:15px;height:20px;border-radius:0 2px 2px 0;background:linear-gradient(180deg,#f2f2f2,#e2e2e2 50%,#d0d0d0)"></div>
<svg class="abs" style="left:658px;top:462px" width="8" height="5"><path d="M0,0 H7.4 L3.7,4.6 Z" fill="#000"/></svg>
<div class="fld" style="left:568px;top:474px;width:102px;height:18px;background:#f0f0f0"></div>
<div class="fld" style="left:628px;top:496px;width:42px;height:18px"></div>
<div class="abs lbl" style="left:630px;top:499.5px;font-size:11px">20</div>
<div class="fld" style="left:628px;top:518px;width:42px;height:18px"></div>
<div class="abs lbl" style="left:630px;top:521.5px;font-size:11px">6</div>
<div class="fld" style="left:628px;top:540px;width:42px;height:18px;background:#f0f0f0"></div>
<div class="fld" style="left:568px;top:562px;width:102px;height:22px;background:#f0f0f0;border-radius:2px"></div>
<div class="abs" style="left:654px;top:563px;width:15px;height:20px;border-radius:0 2px 2px 0;background:#f4f4f4"></div>
<div class="abs lbl" style="left:571px;top:568px;font-size:10.8px;color:#6d6d6d">Symmetric</div>
<svg class="abs" style="left:658px;top:572px" width="8" height="5"><path d="M0,0 H7.4 L3.7,4.4 Z" fill="#a4a4a4"/></svg>
<div class="btn" style="left:530px;top:591px;width:68px;color:#a0a0a0;background:#f4f4f4;border-color:#adadad">Apply</div>
</body></html>
